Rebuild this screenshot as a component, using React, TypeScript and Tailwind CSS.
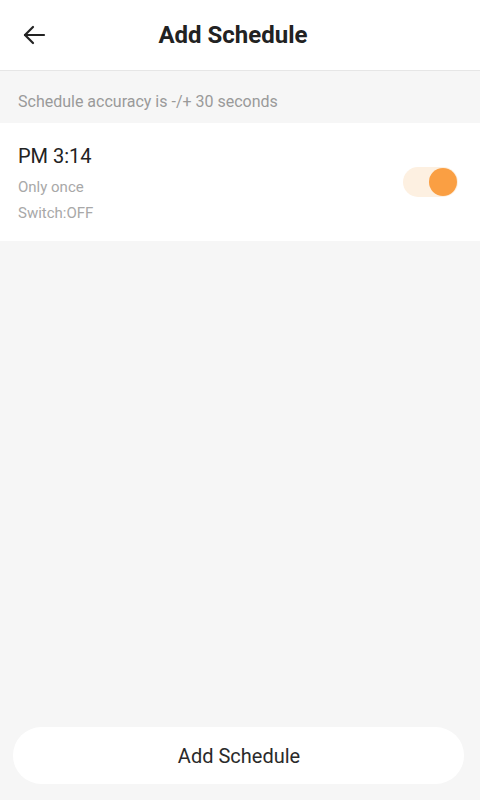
export default function App() {
  return (
    <div
      className="flex h-[800px] w-[480px] flex-col bg-[#f6f6f6]"
      style={{ fontFamily: "Roboto, 'Liberation Sans', sans-serif" }}
    >
      {/* header */}
      <div className="flex h-[71px] items-center border-b border-[#e6e6e6] bg-white px-[22px]">
        <button type="button" className="flex h-[30px] w-[26px] items-center text-[#222]">
          <svg width="24" height="20" viewBox="0 0 24 20" fill="none" stroke="currentColor" strokeWidth="2.2" strokeLinecap="round" strokeLinejoin="round">
            <path d="M22 10H3" />
            <path d="M11 2L3 10l8 8" />
          </svg>
        </button>
        <h1 className="flex-1 pr-[40px] text-center text-[24px] font-bold text-[#222]">Add Schedule</h1>
      </div>

      <p className="px-[18px] pt-[21px] pb-[11px] text-[16px] leading-[20px] text-[#9a9a9a]">
        Schedule accuracy is -/+ 30 seconds
      </p>

      {/* schedule item */}
      <div className="flex h-[118px] items-center justify-between bg-white pl-[18px] pr-[22px]">
        <div className="flex flex-col pt-[3px]">
          <span className="text-[20px] leading-[24px] text-[#222]">PM 3:14</span>
          <span className="mt-[9px] text-[15px] leading-[20px] text-[#a8a8a8]">Only once</span>
          <span className="mt-[6px] text-[15px] leading-[20px] text-[#a8a8a8]">Switch:OFF</span>
        </div>
        <div className="flex h-[30px] w-[55px] items-center justify-end rounded-full bg-[#fdf0e1] pr-[1px]">
          <div className="h-[28px] w-[28px] rounded-full bg-[#fa9f43]" />
        </div>
      </div>

      <div className="flex-1" />

      <div className="pl-[13px] pr-[16px] pb-[16px]">
        <button
          type="button"
          className="flex h-[57px] w-full items-center justify-center rounded-full bg-white pl-[1px] text-[20px] text-[#2a2a2a]"
        >
          Add Schedule
        </button>
      </div>
    </div>
  );
}
